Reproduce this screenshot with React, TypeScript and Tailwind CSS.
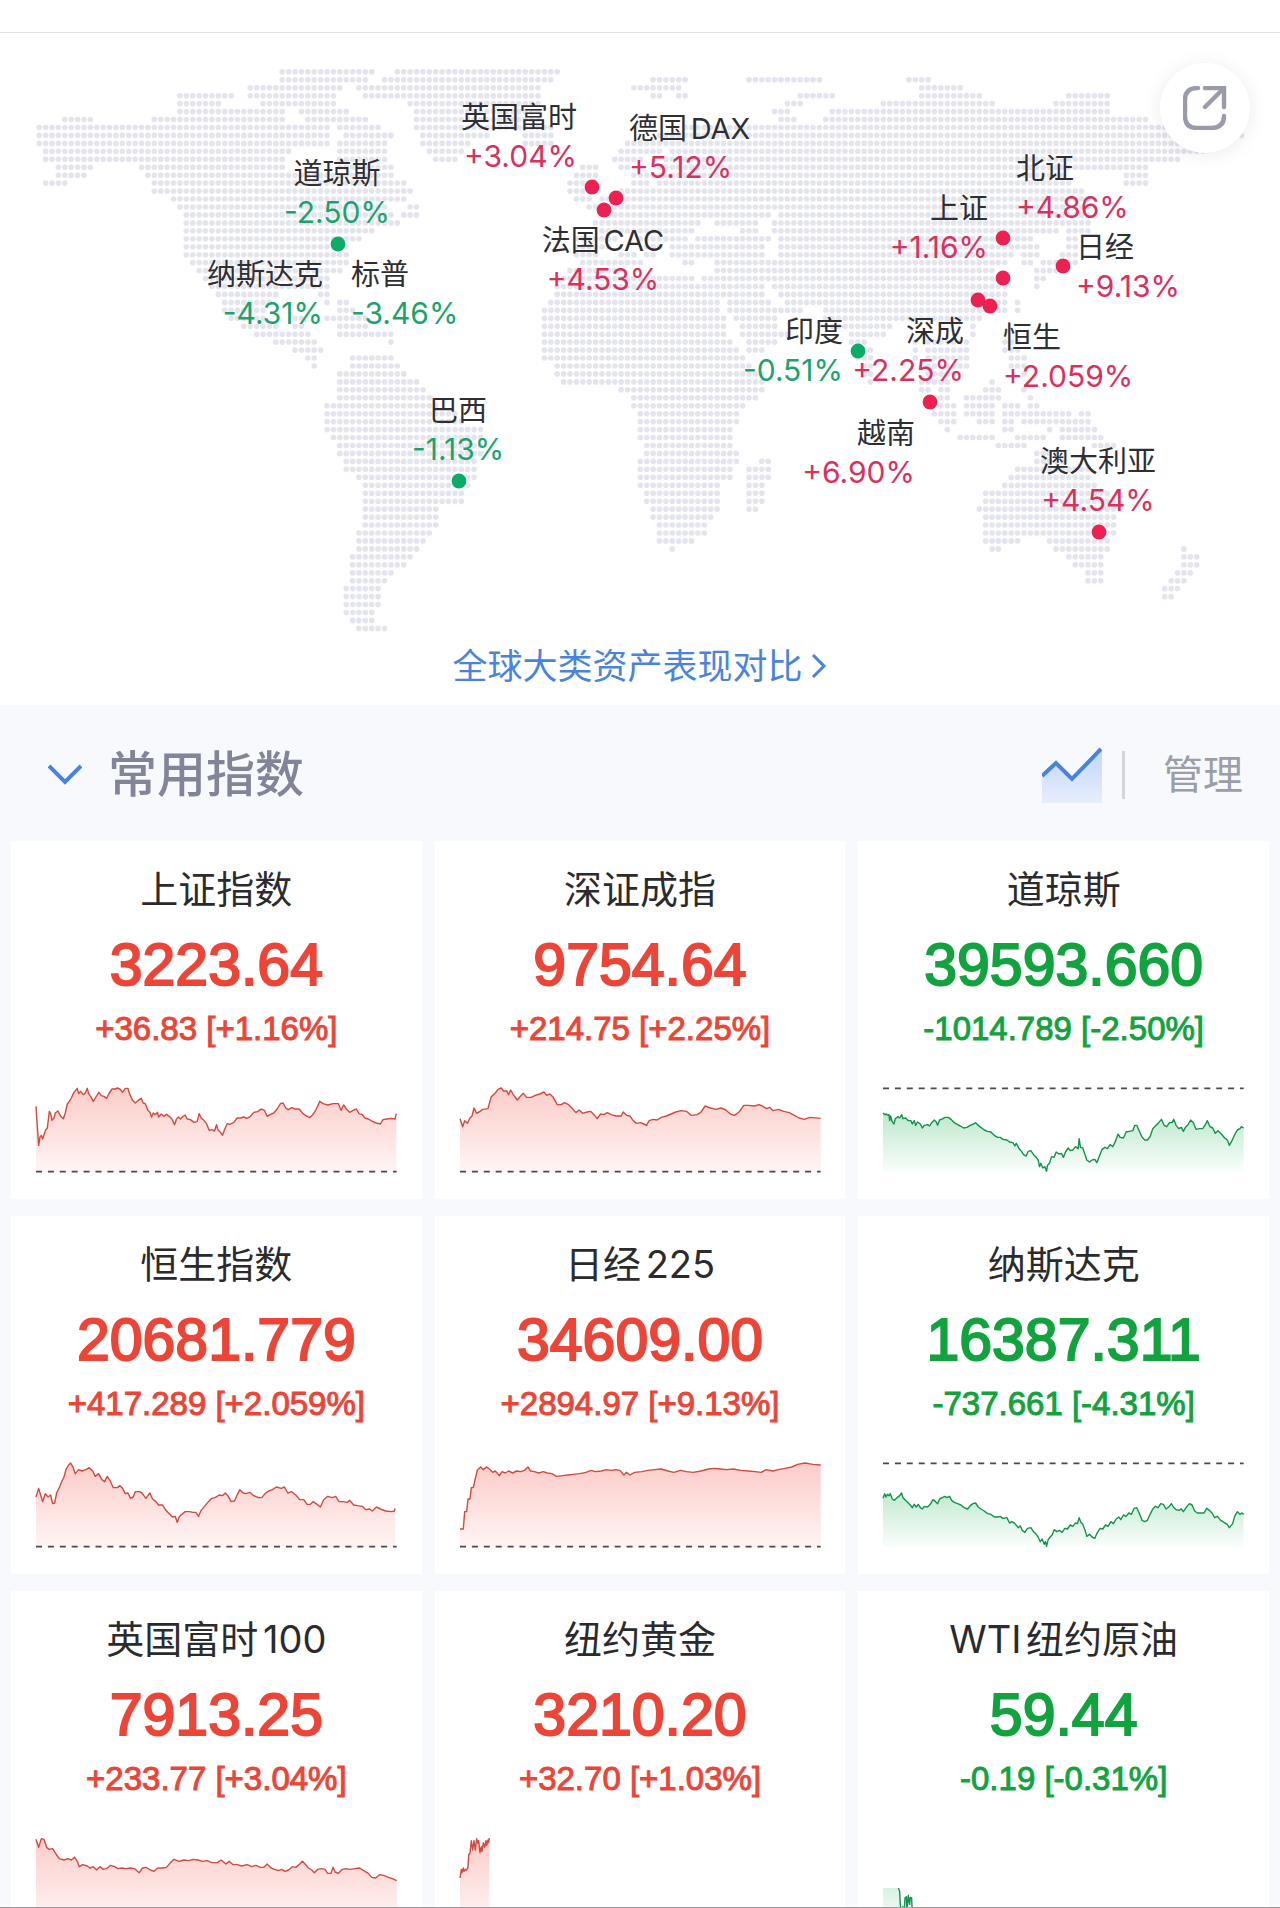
import React from "react";

// Land extents of the dotted world map, one entry per row, [from, to] in map units
const LAND: number[][] = [
  [279, 374, 394, 559],
  [279, 368, 382, 553, 650, 688, 746, 822, 906, 930],
  [247, 342, 356, 540, 631, 681, 919, 962],
  [177, 233, 247, 336, 363, 540, 650, 662, 676, 688, 797, 834, 919, 982, 1066, 1109],
  [177, 221, 260, 336, 407, 540, 784, 802, 880, 994, 1053, 1109],
  [177, 285, 299, 348, 413, 543, 772, 790, 829, 1109],
  [62, 93, 151, 285, 305, 368, 413, 543, 778, 796, 823, 1148],
  [37, 329, 337, 380, 414, 553, 683, 1180],
  [37, 329, 343, 393, 420, 488, 523, 553, 657, 1243],
  [37, 329, 337, 387, 420, 470, 523, 553, 627, 1215],
  [43, 291, 337, 387, 427, 463, 618, 664, 670, 1205],
  [43, 285, 337, 387, 430, 457, 612, 643, 663, 1180],
  [56, 93, 138, 285, 337, 393, 580, 598, 618, 630, 655, 1148],
  [56, 86, 145, 393, 574, 598, 630, 1065, 1123, 1148],
  [43, 67, 151, 406, 568, 592, 630, 650, 657, 1070, 1123, 1148],
  [151, 413, 568, 590, 618, 1084],
  [171, 406, 574, 590, 600, 1090],
  [177, 390, 407, 419, 587, 1093],
  [183, 393, 401, 419, 606, 770, 779, 1093],
  [183, 400, 593, 699, 714, 758, 772, 1090],
  [183, 374, 598, 693, 740, 758, 772, 1058, 1065, 1090],
  [183, 361, 573, 615, 640, 690, 698, 770, 778, 1033, 1065, 1078],
  [183, 348, 573, 610, 645, 664, 670, 763, 778, 1039, 1065, 1078],
  [183, 348, 573, 598, 618, 637, 645, 657, 670, 763, 778, 1013, 1021, 1039, 1059, 1078],
  [190, 348, 580, 642, 682, 693, 713, 1008, 1021, 1033, 1040, 1078],
  [196, 342, 568, 615, 714, 996, 1033, 1057],
  [205, 329, 562, 693, 701, 1000, 1033, 1045],
  [212, 329, 555, 763, 772, 1008, 1033, 1039],
  [215, 278, 318, 329, 555, 763, 778, 1008],
  [222, 272, 323, 329, 337, 348, 548, 719, 727, 770, 784, 1008, 1012, 1019],
  [222, 265, 337, 355, 542, 719, 727, 800, 823, 1007, 1012, 1018],
  [228, 265, 292, 303, 325, 365, 542, 725, 733, 777, 823, 982],
  [240, 278, 292, 303, 337, 368, 542, 725, 739, 777, 823, 892, 971, 975],
  [254, 310, 337, 393, 542, 727, 740, 791, 848, 885, 970, 975],
  [273, 317, 388, 393, 542, 732, 746, 777, 848, 869, 913, 917, 926, 968, 1005, 1020],
  [292, 323, 542, 739, 746, 765, 854, 872, 912, 918, 925, 969, 1003, 1020],
  [305, 317, 350, 393, 542, 745, 854, 873, 912, 918, 925, 969, 1009, 1026],
  [312, 317, 350, 400, 554, 750, 862, 873, 925, 967, 1009, 1026],
  [337, 406, 554, 762, 862, 873, 925, 958, 1020, 1026],
  [337, 419, 561, 762, 867, 873, 922, 950, 989, 994],
  [337, 426, 618, 764, 919, 930, 938, 950, 983, 1001, 1020, 1026],
  [337, 432, 631, 758, 938, 950, 963, 1001, 1027, 1033],
  [324, 440, 631, 745, 938, 956, 963, 994, 1002, 1020, 1027, 1039],
  [324, 455, 637, 739, 931, 956, 963, 994, 1002, 1071, 1079, 1090],
  [324, 465, 637, 739, 938, 956, 976, 994, 1002, 1013, 1022, 1090],
  [324, 482, 637, 733, 944, 949, 1002, 1013, 1047, 1052, 1060, 1097],
  [331, 482, 637, 733, 957, 994, 1015, 1045, 1060, 1103],
  [337, 482, 644, 733, 995, 1026, 1092, 1115],
  [337, 482, 644, 739, 1034, 1060],
  [343, 477, 637, 739, 758, 771, 1034, 1065],
  [343, 477, 637, 733, 746, 771, 1015, 1090],
  [356, 477, 637, 733, 746, 771, 1008, 1091],
  [362, 470, 637, 720, 746, 764, 1002, 1097],
  [362, 463, 644, 720, 746, 764, 983, 1110],
  [362, 463, 644, 720, 746, 764, 983, 1115],
  [362, 438, 650, 720, 746, 758, 976, 1115],
  [362, 438, 650, 713, 983, 1115],
  [362, 438, 656, 707, 983, 1115],
  [356, 432, 656, 707, 983, 1115],
  [356, 425, 656, 694, 983, 1020, 1047, 1109],
  [356, 419, 669, 675, 989, 1000, 1053, 1109, 1181, 1186],
  [350, 412, 1066, 1103, 1181, 1199],
  [350, 406, 1073, 1103, 1181, 1199],
  [350, 393, 1086, 1103, 1175, 1192],
  [350, 387, 1086, 1103, 1169, 1186],
  [343, 381, 1162, 1180],
  [343, 381, 1162, 1173],
  [343, 381],
  [343, 374],
  [350, 374],
  [356, 387],
];

const COL = 6.395;
const ROW = 7.951;

const landPath = () => {
  let d = "";
  LAND.forEach((runs, r) => {
    const y = (38.8 + r * ROW).toFixed(1);
    for (let i = 0; i < runs.length; i += 2) {
      const from = Math.round((runs[i] + 2.5 - 39.2) / COL);
      const to = Math.max(from, Math.round((runs[i + 1] - 2.5 - 39.2) / COL));
      for (let c = from; c <= to; c++) {
        d += `M${(39.2 + c * COL).toFixed(1)} ${y}h0`;
      }
    }
  });
  return d;
};

const MAP_W = 1280;
const MAP_H = 606;

// x is the left, centre or right edge of the label, depending on align
const LABELS = [
  { name: "道琼斯", change: "-2.50%", x: 337, y: 122, align: "center" },
  { name: "纳斯达克", change: "-4.31%", x: 323, y: 223, align: "right" },
  { name: "标普", change: "-3.46%", x: 351, y: 223, align: "left" },
  { name: "巴西", change: "-1.13%", x: 458, y: 359, align: "center" },
  { name: "英国富时", change: "+3.04%", x: 577, y: 66, align: "right" },
  { name: "德国DAX", change: "+5.12%", x: 629, y: 77, align: "left" },
  { name: "法国CAC", change: "+4.53%", x: 603, y: 189, align: "center" },
  { name: "北证", change: "+4.86%", x: 1016, y: 117, align: "left" },
  { name: "上证", change: "+1.16%", x: 988, y: 157, align: "right" },
  { name: "日经", change: "+9.13%", x: 1076, y: 196, align: "left" },
  { name: "印度", change: "-0.51%", x: 843, y: 280, align: "right" },
  { name: "深成", change: "+2.25%", x: 964, y: 280, align: "right" },
  { name: "恒生", change: "+2.059%", x: 1003, y: 286, align: "left" },
  { name: "越南", change: "+6.90%", x: 915, y: 382, align: "right" },
  { name: "澳大利亚", change: "+4.54%", x: 1098, y: 410, align: "center" },
];

const PINS = [
  { x: 338, y: 211, up: false },
  { x: 459, y: 448, up: false },
  { x: 858, y: 318, up: false },
  { x: 592, y: 154, up: true },
  { x: 616, y: 165, up: true },
  { x: 604, y: 177, up: true },
  { x: 1003, y: 205, up: true },
  { x: 1003, y: 245, up: true },
  { x: 978, y: 267, up: true },
  { x: 990, y: 273, up: true },
  { x: 1063, y: 233, up: true },
  { x: 930, y: 369, up: true },
  { x: 1099, y: 499, up: true },
];

const alignClass: Record<string, string> = {
  left: "items-start",
  center: "items-center -translate-x-1/2",
  right: "items-end -translate-x-full",
};

const INDICES = [
  {
    name: "上证指数",
    price: "3223.64",
    change: "+36.83 [+1.16%]",
    up: true,
    line: "0,55 3,100 8,172 12,147 16,142 20,153 28,128 34,120 40,70 44,78 48,97 54,90 58,75 66,69 74,85 82,92 88,75 94,48 100,40 106,30 114,13 124,1 128,17 134,10 142,20 148,15 154,1 158,17 164,25 172,40 180,27 189,13 196,23 204,25 212,31 220,15 228,3 238,3 244,0 252,3 260,13 268,1 276,1 282,20 290,37 298,45 306,38 316,31 322,45 328,47 336,67 342,73 347,87 352,75 358,80 365,73 368,87 376,78 384,85 392,79 400,85 408,93 416,110 422,93 428,87 434,93 442,85 448,81 454,93 464,95 474,103 484,101 490,77 496,90 504,97 512,107 520,127 528,125 536,129 542,110 546,125 554,133 560,142 566,125 574,107 582,109 594,103 604,90 614,90 624,87 632,91 642,87 654,73 666,71 676,63 686,67 694,85 704,79 714,75 724,63 734,47 742,45 750,60 758,65 768,59 778,63 790,63 800,75 810,83 822,89 832,79 842,63 852,40 862,47 876,51 892,47 908,47 916,67 924,51 932,63 942,73 952,67 962,63 970,77 980,80 988,90 998,93 1010,100 1022,105 1034,108 1042,95 1054,93 1066,91 1078,93 1082,77",
  },
  {
    name: "深证成指",
    price: "9754.64",
    change: "+214.75 [+2.25%]",
    up: true,
    line: "0,92 8,116 14,98 22,106 30,90 36,84 42,60 50,76 60,70 68,64 84,62 94,26 104,18 114,4 124,0 132,10 140,8 146,20 152,6 160,20 172,36 182,24 190,16 200,28 214,28 226,22 240,18 252,12 260,22 270,18 280,28 292,50 304,50 314,44 326,50 338,62 348,74 358,66 368,76 382,72 392,70 404,82 412,92 422,78 432,80 442,74 454,80 468,84 484,84 490,72 500,82 510,84 520,98 530,106 542,104 552,108 560,112 568,98 580,94 592,96 604,88 620,84 634,78 648,72 664,68 680,70 694,82 712,80 724,72 736,54 752,60 768,64 784,60 798,66 812,78 824,82 838,72 852,52 866,52 884,54 898,50 908,54 920,62 930,58 940,68 956,64 972,70 988,74 1004,82 1018,90 1034,94 1050,88 1083,91",
  },
  {
    name: "道琼斯",
    price: "39593.660",
    change: "-1014.789 [-2.50%]",
    up: false,
    line: "0,75 6,80 10,78 14,82 18,80 20,98 23,84 27,100 33,108 37,92 44,86 50,90 56,80 60,92 68,90 76,98 84,98 88,108 94,98 98,112 104,102 112,108 118,120 124,112 134,110 140,114 146,104 154,96 160,102 164,112 170,96 180,92 186,88 196,88 204,94 214,104 224,110 232,114 242,120 252,118 262,112 272,108 278,104 286,112 294,118 304,126 314,130 324,132 334,142 344,148 352,148 360,154 372,156 380,162 390,164 396,174 400,166 410,184 416,190 422,200 430,204 436,190 444,188 452,200 460,208 466,216 470,236 474,226 480,240 486,236 491,250 494,232 500,226 506,206 514,208 520,192 528,198 536,196 542,208 548,192 556,180 562,188 570,186 578,176 586,182 589,152 593,178 600,180 606,198 612,216 620,222 628,216 636,214 642,224 650,204 658,184 666,178 674,182 682,170 690,176 698,160 706,138 712,148 722,150 730,132 740,130 750,128 756,112 762,112 770,130 778,148 786,156 794,156 802,146 810,122 820,112 828,104 836,94 844,112 852,116 860,104 868,104 873,94 880,112 888,122 896,118 902,130 908,118 916,110 924,96 932,104 940,124 950,122 960,122 968,110 974,98 982,116 990,120 998,136 1006,128 1016,138 1026,150 1034,156 1040,172 1048,158 1056,140 1064,126 1072,122 1076,116 1083,120",
  },
  {
    name: "恒生指数",
    price: "20681.779",
    change: "+417.289 [+2.059%]",
    up: true,
    line: "0,102 8,76 12,90 20,116 28,92 36,102 44,96 50,122 56,120 62,90 70,74 78,54 84,42 90,20 98,6 104,0 110,10 118,32 128,20 138,24 150,20 160,14 170,24 178,40 188,32 198,50 206,56 214,40 224,56 232,74 244,74 252,68 260,76 268,92 276,90 284,106 292,102 298,86 310,86 318,90 330,106 342,90 350,108 360,116 368,126 380,126 390,142 400,152 410,162 418,160 424,178 430,162 438,154 448,146 460,146 472,148 480,148 488,160 496,142 506,130 516,118 528,106 538,104 550,96 560,98 568,90 576,98 586,116 596,114 604,96 612,80 622,90 630,92 642,88 654,98 668,104 678,104 688,92 698,84 710,80 722,72 736,76 746,72 756,90 768,86 780,96 792,110 804,110 814,124 824,124 832,116 844,124 854,132 864,110 876,100 890,104 900,100 910,116 922,116 934,118 942,112 954,126 966,128 980,130 990,140 1002,138 1010,144 1022,132 1034,138 1050,144 1068,146 1076,144 1078,136",
  },
  {
    name: "日经225",
    price: "34609.00",
    change: "+2894.97 [+9.13%]",
    up: true,
    line: "0,198 10,198 14,146 20,146 24,108 30,108 34,74 40,74 46,46 52,22 62,12 70,20 80,12 88,18 98,28 106,24 118,38 126,26 136,30 146,24 158,30 170,24 182,26 194,22 204,12 212,24 224,26 236,30 250,26 262,30 276,32 290,40 308,38 324,36 340,34 360,32 378,28 394,22 406,26 424,24 440,20 454,22 468,20 480,22 492,36 500,28 510,36 524,28 546,26 564,22 584,20 604,18 624,24 642,28 662,22 680,26 700,28 724,24 746,18 764,16 782,18 800,20 820,18 844,22 866,24 886,26 904,28 920,20 940,24 956,20 976,16 996,12 1014,4 1036,0 1060,4 1083,6",
  },
  {
    name: "纳斯达克",
    price: "16387.311",
    change: "-737.661 [-4.31%]",
    up: false,
    line: "0,106 5,92 9,102 13,94 18,98 22,92 28,108 34,112 42,104 50,98 56,90 60,104 66,110 74,118 82,126 88,134 94,124 100,132 106,124 112,134 118,138 124,130 134,132 142,124 150,110 158,116 164,122 170,108 178,104 186,100 192,104 200,100 206,112 214,118 224,122 234,126 244,134 254,138 262,128 270,122 278,120 286,132 294,138 304,144 314,152 324,154 334,162 344,162 352,160 360,166 372,164 380,180 388,176 396,182 406,194 412,188 418,202 426,208 434,196 444,194 452,206 460,214 466,222 472,236 478,228 484,244 488,236 491,250 496,230 502,222 508,216 514,200 522,206 530,202 538,208 546,196 554,198 562,186 570,190 578,180 584,182 589,164 594,178 600,184 606,200 612,220 620,214 628,222 636,226 644,208 652,196 660,198 668,186 676,190 684,176 692,182 700,168 708,162 714,170 722,156 730,160 738,150 746,154 754,136 762,134 770,152 778,172 786,176 794,172 802,154 810,138 818,130 826,134 834,122 842,124 850,138 858,132 866,122 872,132 880,140 888,142 896,138 902,146 910,134 920,122 928,126 936,144 944,150 954,150 964,150 972,136 980,142 988,150 996,164 1004,160 1014,172 1024,178 1034,184 1040,194 1050,182 1056,160 1064,146 1072,154 1078,150 1083,154",
  },
  {
    name: "英国富时100",
    price: "7913.25",
    change: "+233.77 [+3.04%]",
    up: true,
    line: "0,4 8,28 16,2 24,4 32,28 40,34 50,32 60,48 70,62 84,66 96,62 106,66 116,58 124,70 130,86 140,80 154,84 162,90 172,86 182,96 192,86 202,94 212,92 224,82 236,86 246,92 258,90 270,92 284,90 296,92 310,104 320,90 330,88 344,96 354,100 366,90 380,90 392,88 402,76 414,64 430,70 444,66 458,68 472,64 486,66 500,70 514,68 528,74 544,74 556,66 570,78 580,70 592,80 604,80 618,84 634,80 648,86 660,82 674,88 684,88 694,78 706,90 716,94 728,98 738,94 748,100 758,96 770,86 780,88 790,80 800,70 810,80 818,90 828,96 836,104 846,94 858,92 868,94 876,106 886,106 892,88 898,102 908,106 920,94 930,92 944,94 956,92 972,90 984,98 998,106 1008,118 1020,120 1032,110 1044,112 1058,118 1070,122 1083,128",
  },
  {
    name: "纽约黄金",
    price: "3210.20",
    change: "+32.70 [+1.03%]",
    up: true,
    line: "0,120 4,94 6,104 10,90 12,100 16,94 20,96 24,88 26,50 30,46 34,8 38,36 42,8 46,36 50,2 54,16 56,8 60,44 64,26 66,40 70,14 74,28 78,8 80,22 84,6 86,14 88,0",
  },
  {
    name: "WTI纽约原油",
    price: "59.44",
    change: "-0.19 [-0.31%]",
    up: false,
    partial: true,
    line: "46,150 50,160 52,200 56,236 60,206 64,224 66,180 70,176 72,216 76,172 80,200 82,178 86,180 88,226 90,250",
  },
];

type IndexItem = (typeof INDICES)[number];

const Sparkline = ({ item, id }: { item: IndexItem; id: string }) => {
  const points = item.line.split(" ");
  const last = points[points.length - 1].split(",")[0];
  const area = item.partial
    ? "0,252 0,150 46,150 50,160 52,252"
    : `0,252 ${item.line} ${last},252`;
  const color = item.up ? "#d14a40" : "#14924a";
  const fill = item.up ? "#f4564a" : "#1fb455";

  return (
    <svg
      className="block h-[84px] w-full overflow-visible"
      viewBox="0 0 1083 252"
      preserveAspectRatio="none"
      aria-hidden="true"
    >
      <defs>
        <linearGradient id={id} gradientUnits="userSpaceOnUse" x1="0" y1="0" x2="0" y2="252">
          <stop offset="0" stopColor={fill} stopOpacity={item.up ? 0.3 : 0.42} />
          <stop offset="1" stopColor={fill} stopOpacity={item.up ? 0.06 : 0.02} />
        </linearGradient>
      </defs>
      <polygon points={area} fill={`url(#${id})`} />
      <polyline
        points={item.line}
        fill="none"
        stroke={color}
        strokeWidth="1.4"
        strokeLinejoin="round"
        vectorEffect="non-scaling-stroke"
      />
      {!item.partial && (
        <line
          x1="0"
          x2="1083"
          y1={item.up ? 251 : 1}
          y2={item.up ? 251 : 1}
          stroke="#4a4a4a"
          strokeWidth="1.6"
          strokeDasharray="6 5.9"
          vectorEffect="non-scaling-stroke"
        />
      )}
    </svg>
  );
};

const IndexCard = ({ item, id }: { item: IndexItem; id: string }) => (
  <article className="bg-white px-[25px] pt-5 pb-[27px] text-center">
    <h3 className="text-[38px] leading-[56px] text-[#2b2b2d] whitespace-nowrap [text-autospace:normal]">
      {item.name}
    </h3>
    <div
      className={
        item.up
          ? "font-['Liberation_Sans',Arial,sans-serif] text-[#ec4537]"
          : "font-['Liberation_Sans',Arial,sans-serif] text-[#12a33f]"
      }
    >
      <p className="mt-3 text-[59px] leading-[72px] whitespace-nowrap [-webkit-text-stroke:2px_currentColor]">
        {item.price}
      </p>
      <p className="mt-2 text-[33px] leading-[40px] whitespace-nowrap [-webkit-text-stroke:1px_currentColor]">
        {item.change}
      </p>
    </div>
    <div className="mt-[39px]">
      <Sparkline item={item} id={id} />
    </div>
  </article>
);

const WorldMap = () => (
  <div className="relative">
    <svg className="block w-full" viewBox={`0 0 ${MAP_W} ${MAP_H}`} aria-hidden="true">
      <path d={landPath()} fill="none" stroke="#e4e4ef" strokeWidth="5.6" strokeLinecap="round" />
      {PINS.map((pin) => (
        <circle
          key={`${pin.x}-${pin.y}`}
          cx={pin.x}
          cy={pin.y}
          r="7.4"
          fill={pin.up ? "#ec2152" : "#0cab68"}
        />
      ))}
    </svg>
    {LABELS.map((label) => (
      <div
        key={label.name}
        className={`absolute flex flex-col leading-[38px] whitespace-nowrap ${alignClass[label.align]}`}
        style={{ left: `${(label.x / MAP_W) * 100}%`, top: `${(label.y / MAP_H) * 100}%` }}
      >
        <span className="text-[29px] text-[#2f2f33] [text-autospace:normal]">{label.name}</span>
        <span
          className={
            label.change.startsWith("+") ? "text-[30px] text-[#d9315e]" : "text-[30px] text-[#1ba36e]"
          }
        >
          {label.change}
        </span>
      </div>
    ))}
    <button
      type="button"
      aria-label="分享"
      className="absolute top-[30px] right-[30px] flex h-[90px] w-[90px] items-center justify-center rounded-full bg-white shadow-[0_2px_20px_rgba(0,0,0,0.08)]"
    >
      <svg width="44" height="44" viewBox="0 0 44 44" fill="none" stroke="#9a9ba9" strokeWidth="4.4" strokeLinecap="round">
        <path d="M15 2h-1Q2 2 2 14v16Q2 42 14 42h14Q41 42 41 30" />
        <path d="M22 2h19v19" strokeLinejoin="miter" />
        <path d="M40 3L22 21" />
      </svg>
    </button>
  </div>
);

const App = () => {
  return (
    <div className="flex h-screen flex-col overflow-hidden border-b border-[#9a9a9c] bg-white font-[Inter,'Noto_Sans_CJK_SC',sans-serif]">
      <div className="h-8 shrink-0" />
      <section className="shrink-0 border-t border-[#e4e4e6]">
        <WorldMap />
        <div className="flex justify-center pb-3">
          <a href="#assets" className="flex items-center gap-2 text-[35px] leading-[54px] text-[#4a84da]">
            全球大类资产表现对比
            <svg width="17" height="24" viewBox="0 0 17 24" fill="none" stroke="currentColor" strokeWidth="3">
              <path d="M2 1L13 12L2 23" />
            </svg>
          </a>
        </div>
      </section>

      <section className="shrink-0 bg-[#f7f9fd]">
        <header className="flex items-center justify-between pt-[34px] pr-[37px] pb-[30px] pl-12">
          <button type="button" className="flex items-center gap-[26px]">
            <svg width="34" height="22" viewBox="0 0 34 22" fill="none" stroke="#4a84da" strokeWidth="4">
              <path d="M1 2L17 18L33 2" />
            </svg>
            <h2 className="text-[49px] leading-[72px] font-medium text-[#82859a]">常用指数</h2>
          </button>
          <div className="flex items-center">
            <button type="button" aria-label="走势图">
              <svg width="60" height="56" viewBox="0 0 60 56" fill="none">
                <defs>
                  <linearGradient id="trend" x1="0" y1="0" x2="0" y2="1">
                    <stop offset="0" stopColor="#c2d6f9" />
                    <stop offset="1" stopColor="#e6eefc" />
                  </linearGradient>
                </defs>
                <path d="M0 31L14 18L30 34L60 3V56H0Z" fill="url(#trend)" />
                <path d="M0 29L14 16L30 32L59 2" stroke="#4a84da" strokeWidth="4" />
              </svg>
            </button>
            <span className="ml-5 h-12 w-[3px] bg-[#d4d5db]" />
            <a href="#manage" className="ml-[38px] text-[40px] leading-[56px] text-[#9b9da8]">
              管理
            </a>
          </div>
        </header>
        <div className="grid grid-cols-3 gap-x-[13px] gap-y-[17px] px-[11px] pb-[17px]">
          {INDICES.map((item, i) => (
            <IndexCard key={item.name} item={item} id={`area-${i}`} />
          ))}
        </div>
      </section>
    </div>
  );
};

export default App;
